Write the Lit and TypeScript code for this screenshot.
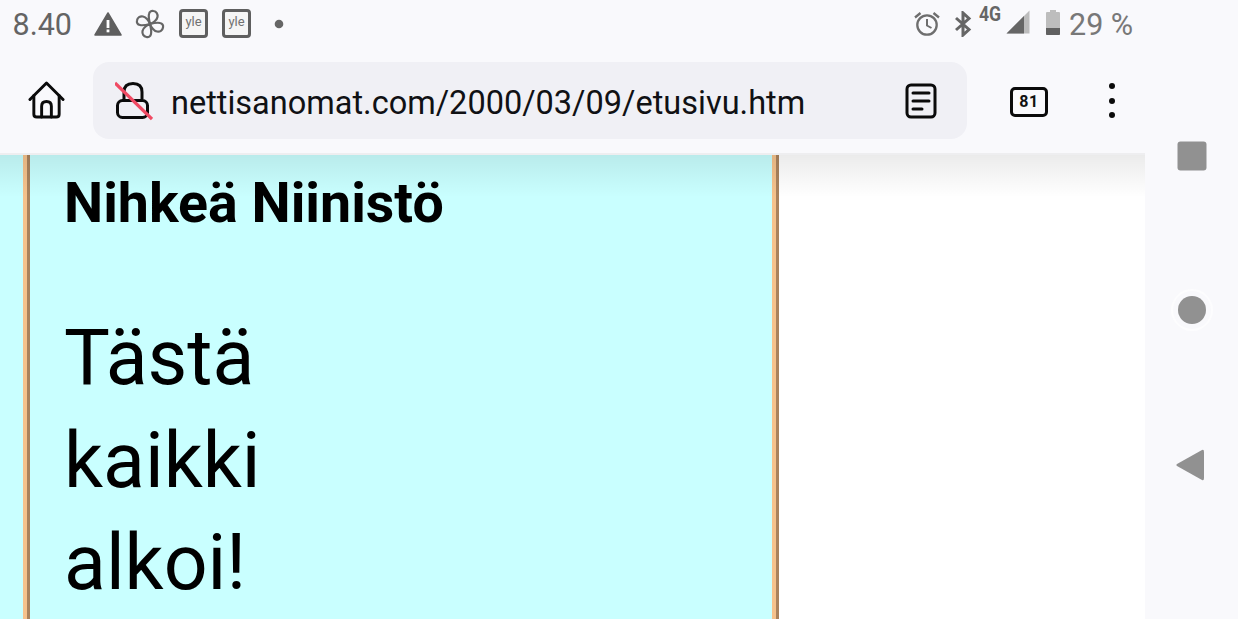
import { LitElement, html, css } from "lit";
import { customElement } from "lit/decorators.js";

@customElement("app-root")
export class AppRoot extends LitElement {
  static styles = css`
    :host { display: flex; width: 1238px; height: 619px; overflow: hidden; font-family: Roboto, sans-serif; background: #f9f9fc; }
    .main { width: 1145px; height: 619px; display: flex; flex-direction: column; position: relative; overflow: hidden; }
    .status { height: 47px; display: flex; align-items: center; padding-left: 12.5px; color: #616161; flex: none; }
    .time { font-size: 30.5px; line-height: 47px; width: 81.5px; color: #646464; position: relative; top: 1px; }
    .status svg { flex: none; display: block; }
    .yle { width: 29px; height: 29px; box-sizing: border-box; border: 3.5px solid #5f5f5f; border-radius: 4px; background: #f5f5f5; color: #707070; font-size: 13px; line-height: 20px; text-align: center; flex: none; }
    .spacer { flex: 1; }
    .fourg { font-size: 20px; font-weight: 700; color: #666; align-self: flex-start; line-height: 20px; margin: 4px 0 0 6px; transform: scaleX(.88); transform-origin: left; width: 27px; white-space: nowrap; }
    .pct { font-size: 30.5px; color: #787878; margin: 0 11px 0 9px; width: 65px; white-space: nowrap; position: relative; top: 1px; }
    .toolbar { height: 106px; display: flex; align-items: center; flex: none; border-bottom: 2px solid #eeeef0; }
    .home { margin: 0 0 0 28px; flex: none; display: block; }
    .pill { width: 874px; height: 77px; margin: 1px 0 0 28px; border-radius: 16px; background: #f0f0f5; display: flex; align-items: center; flex: none; }
    .lock { margin-left: 22px; flex: none; display: block; }
    .url { font-size: 32.5px; color: #101114; margin: 4px 0 0 18px; width: 735px; white-space: nowrap; }
    .reader { display: block; flex: none; margin-left: -1px; }
    .tabs { margin-left: 43px; width: 38px; height: 30px; box-sizing: border-box; border: 3px solid #0b0b0b; border-radius: 5px; font-size: 16px; font-weight: 700; line-height: 24px; text-align: center; color: #111; flex: none; margin-top: 3px; letter-spacing: .5px; }
    .dots { margin-left: 61px; display: flex; flex-direction: column; gap: 8.5px; margin-top: 1px; flex: none; }
    .dots i { display: block; width: 6px; height: 6px; border-radius: 50%; background: #0b0b0b; }
    .page { flex: 1; display: flex; background: #fff; position: relative; min-height: 0; }
    .shade { position: absolute; left: 0; right: 0; top: 0; height: 42px; background: linear-gradient(#00000014, #00000000); pointer-events: none; }
    .cyan { width: 772px; background: #c9ffff; padding-left: 23px; box-sizing: border-box; display: flex; flex: none; }
    .frame { flex: 1; border-left: 4px solid #f5c28c; border-right: 3px solid #a9825c; display: flex; margin-right: -7px; }
    .inner { flex: 1; border-left: 3px solid #a9825c; border-right: 4px solid #f5c28c; background: #c9ffff; padding: 17px 0 0 34px; color: #000; }
    h1 { margin: 0; font-size: 55.5px; line-height: 64px; font-weight: 700; }
    .big { margin: 71px 0 0; font-size: 77px; line-height: 102.5px; font-weight: 400; }
    .nav { width: 93px; flex: none; background: #f9f9fc; padding-top: 77px; box-sizing: border-box; display: grid; grid-auto-rows: 155px; justify-items: center; align-items: center; }
    .nav svg { display: block; }
    .nav .tri { margin-left: -4px; }
    .nav .sq { margin: 2px 0 0 0; }
  `;

  render() {
    const blade = "M15 15 C14 11 13.5 7 14 5 C14.5 2.5 16.5 1.5 18.5 2 C21.5 2.5 23 5 22.5 8 C22 11 18 14 15 15 Z";
    return html`
      <div class="main">
        <div class="status">
          <span class="time">8.40</span>
          <svg width="28" height="24" viewBox="0 0 28 24" style="margin-right:13px"><path d="M14 1 L27 23 H1 Z" fill="#5f5f5f" stroke="#5f5f5f" stroke-width="1.5" stroke-linejoin="round"/><rect x="12.6" y="8" width="2.8" height="8" fill="#fff"/><rect x="12.6" y="17.5" width="2.8" height="2.8" fill="#fff"/></svg>
          <svg width="30" height="30" viewBox="0 0 30 30" style="margin-right:14px" fill="none" stroke="#666" stroke-width="2.2" stroke-linejoin="round">
            <path d=${blade}/><path d=${blade} transform="rotate(90 15 15)"/><path d=${blade} transform="rotate(180 15 15)"/><path d=${blade} transform="rotate(270 15 15)"/>
          </svg>
          <div class="yle">yle</div>
          <div class="yle" style="margin-left:14px">yle</div>
          <svg width="10" height="10" viewBox="0 0 10 10" style="margin-left:23px"><circle cx="5" cy="5" r="4.3" fill="#666"/></svg>
          <div class="spacer"></div>
          <svg width="28" height="28" viewBox="0 0 28 28" fill="none" stroke="#6e6e6e" stroke-width="2.3"><circle cx="14" cy="15" r="9.7"/><path d="M14 9 V15.5 L18.5 18" stroke-width="2"/><path d="M2 7.5 L7.5 3 M26 7.5 L20.5 3"/></svg>
          <svg width="20" height="26" viewBox="0 0 20 26" style="margin-left:12px" fill="none" stroke="#666" stroke-width="3"><path d="M3 7 L16 18.5 L10 24 V2 L16 7.5 L3 19"/></svg>
          <span class="fourg">4G</span>
          <svg width="24" height="24" viewBox="0 0 24 24" style="margin-top:-3px"><path d="M23.5 0.5 V23.5 H0.5 Z" fill="#bcbcbc"/><path d="M18 6 V23.5 H0.5 Z" fill="#666"/></svg>
          <svg width="14" height="26" viewBox="0 0 14 26" style="margin-left:16px;margin-top:-3px"><path d="M4 1 H10 V3 H13 Q14 3 14 4 V25 Q14 26 13 26 H1 Q0 26 0 25 V4 Q0 3 1 3 H4 Z" fill="#bdbdbd"/><path d="M0 19 H14 V25 Q14 26 13 26 H1 Q0 26 0 25 Z" fill="#616161"/></svg>
          <span class="pct">29 %</span>
        </div>
        <div class="toolbar">
          <svg class="home" width="37" height="39" viewBox="0 0 38 40" fill="none" stroke="#0b0b0b" stroke-width="3" stroke-linejoin="round" stroke-linecap="round"><path d="M2 19 L19 2 L36 19"/><path d="M6 15 V34 Q6 37 9 37 H29 Q32 37 32 34 V15"/><path d="M14 37 V26 Q14 21 19 21 Q24 21 24 26 V37"/></svg>
          <div class="pill">
            <svg class="lock" width="38" height="40" viewBox="0 0 38 40" fill="none" style="margin-top:1px"><path d="M9 18 V11 Q9 2.5 18 2.5 Q27 2.5 27 11 V18" stroke="#0b0b0b" stroke-width="3"/><rect x="2.5" y="19.5" width="30" height="17" rx="5" stroke="#0b0b0b" stroke-width="3"/><path d="M0 2 L37 38" stroke="#f04a63" stroke-width="3.2"/></svg>
            <span class="url">nettisanomat.com/2000/03/09/etusivu.htm</span>
            <svg class="reader" width="32" height="36" viewBox="0 0 32 36" fill="none" stroke="#0b0b0b" stroke-linecap="round" style="margin-top:1px"><rect x="2" y="2" width="28" height="32" rx="4" stroke-width="3"/><path d="M8 10 H24 M8 18 H24 M8 26 H17" stroke-width="3"/></svg>
          </div>
          <div class="tabs">81</div>
          <div class="dots"><i></i><i></i><i></i></div>
        </div>
        <div class="page">
          <div class="cyan">
            <div class="frame">
              <div class="inner">
                <h1>Nihkeä Niinistö</h1>
                <p class="big">Tästä<br />kaikki<br />alkoi!</p>
              </div>
            </div>
          </div>
          <div class="shade"></div>
        </div>
      </div>
      <div class="nav">
        <svg class="sq" width="30" height="30" viewBox="0 0 30 30"><rect x="0.5" y="0.5" width="29" height="29" rx="3" fill="#919191"/></svg>
        <svg class="ci" width="46" height="46" viewBox="0 0 46 46"><circle cx="23" cy="23" r="21" fill="#fdfdfe"/><circle cx="23" cy="23" r="19" fill="#f9f9fc"/><circle cx="23" cy="23" r="14" fill="#919191"/></svg>
        <svg class="tri" width="30" height="34" viewBox="0 0 30 34"><path d="M27 2 Q29 1 29 4 V30 Q29 33 27 32 L2 18 Q0.5 17 2 16 Z" fill="#919191"/></svg>
      </div>
    `;
  }
}
